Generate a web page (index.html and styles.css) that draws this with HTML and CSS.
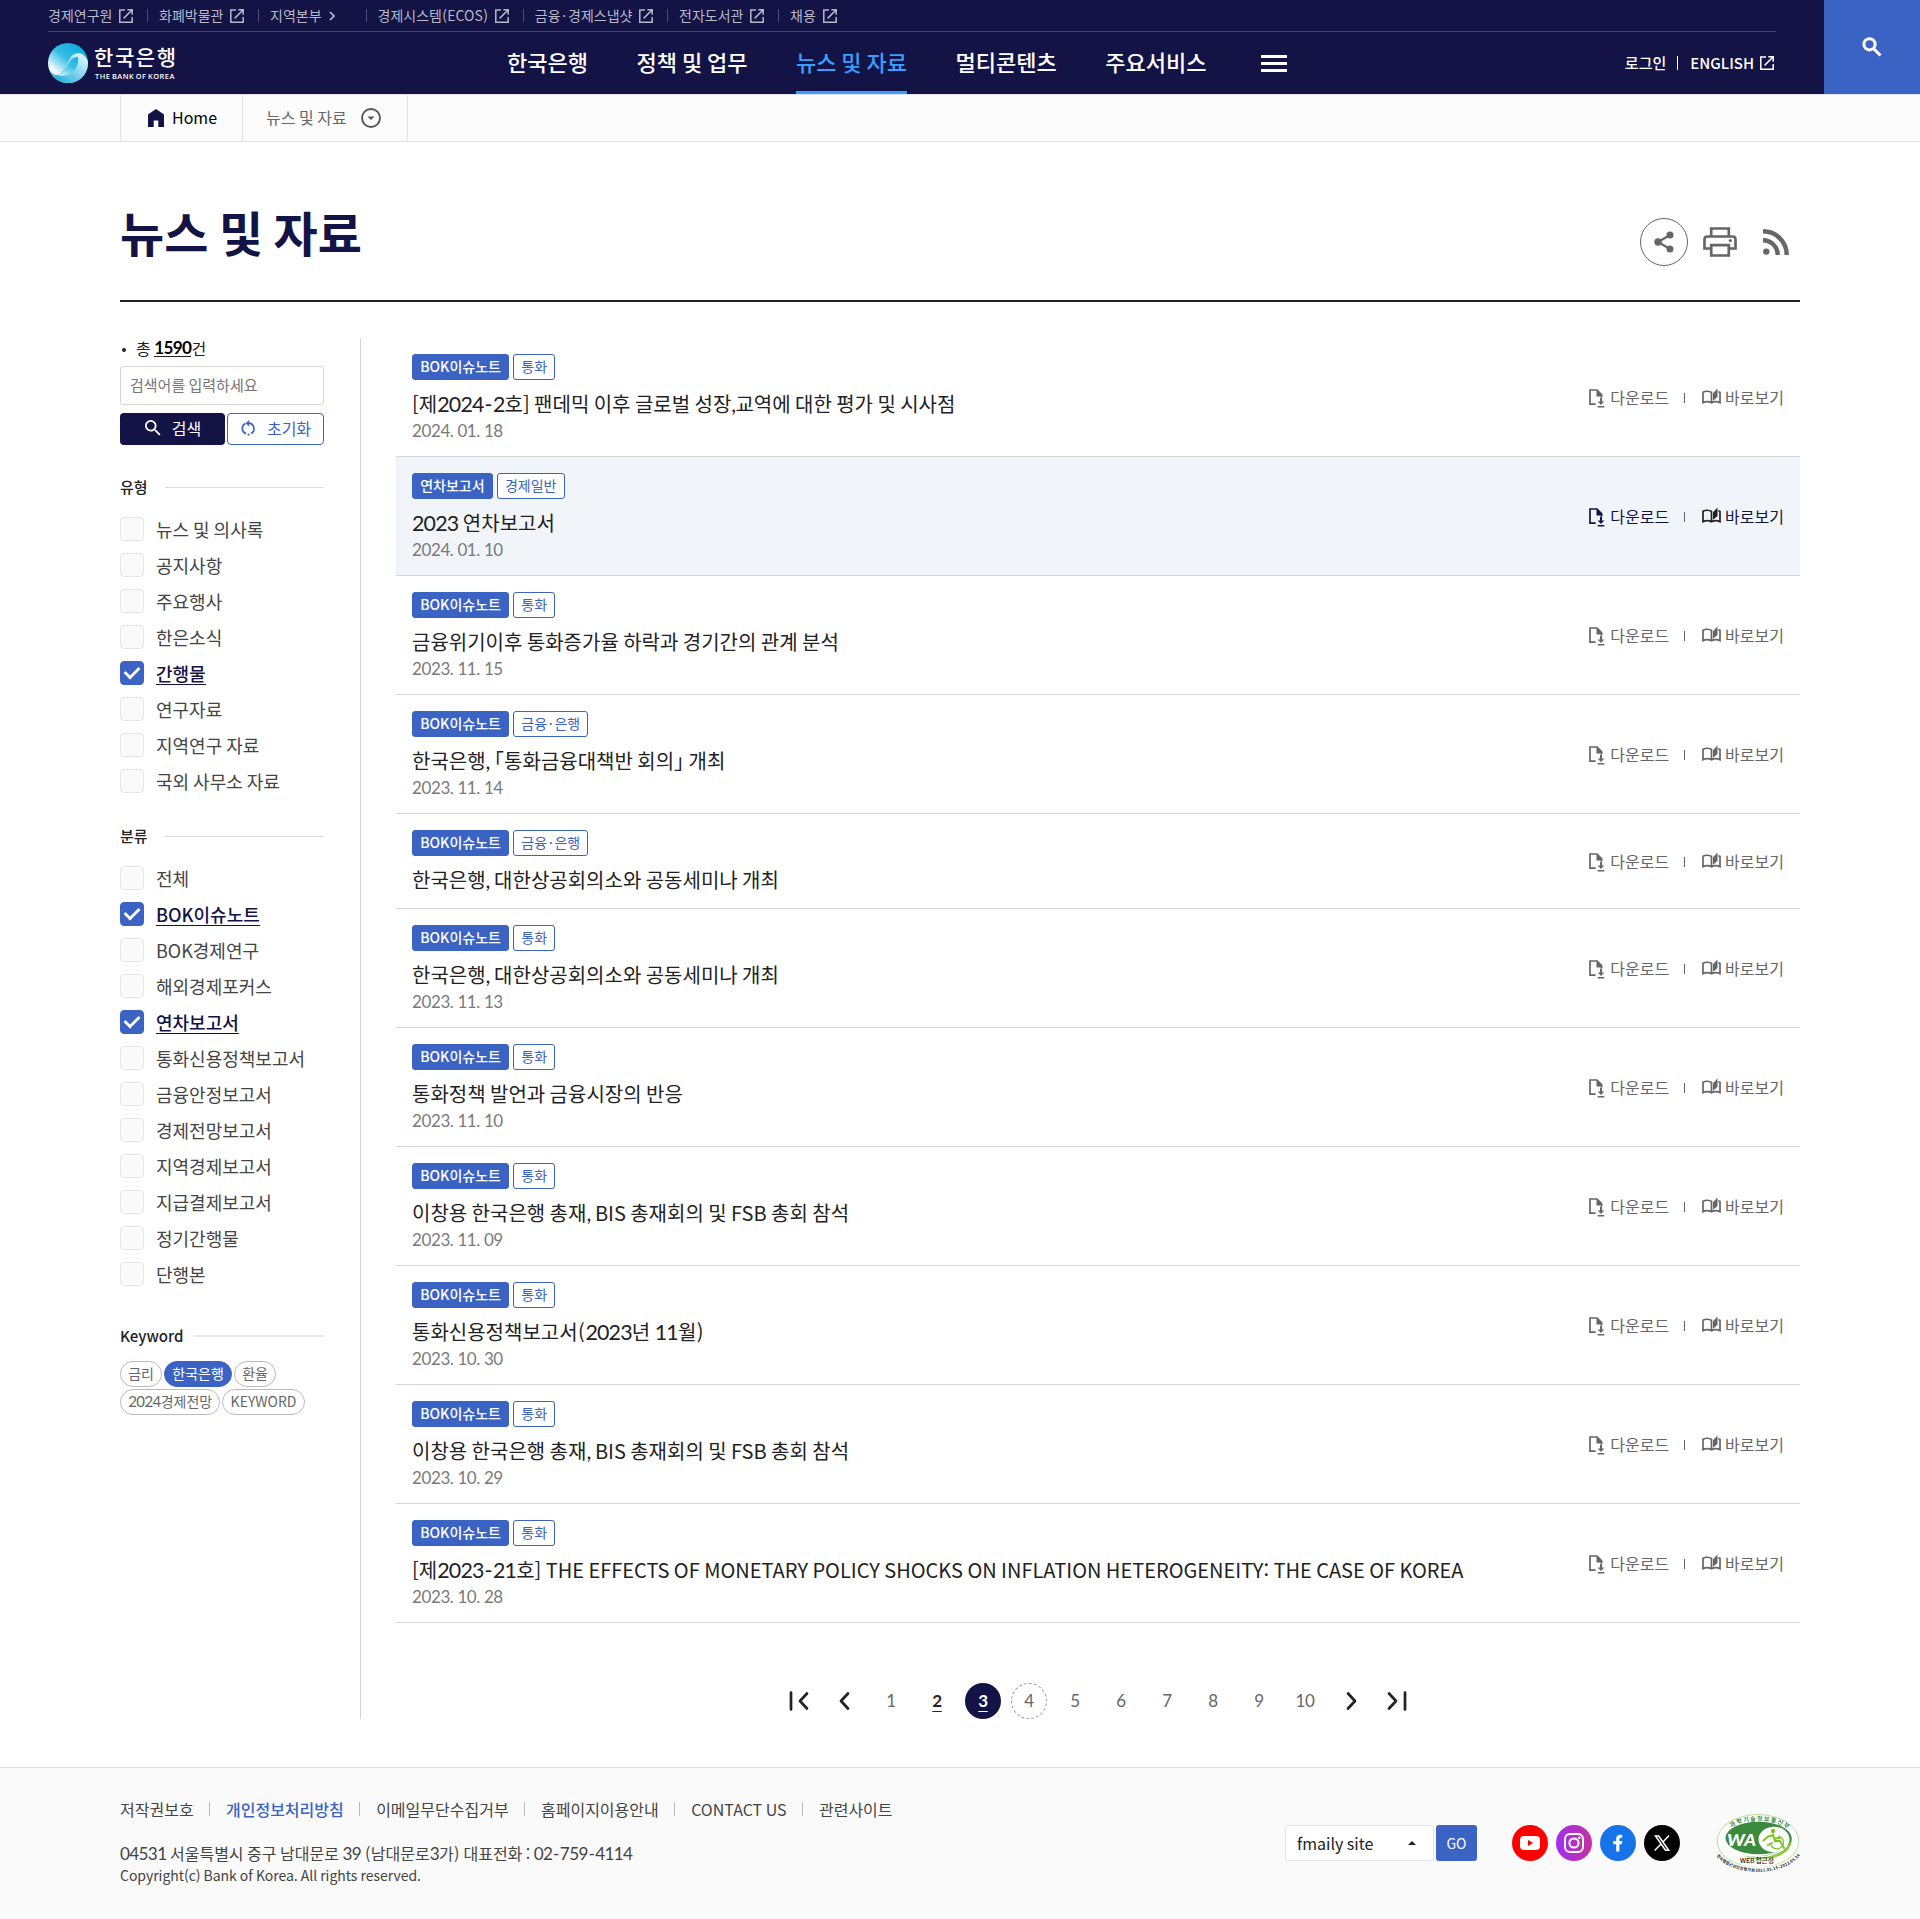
FILE: index.html
```html
<!DOCTYPE html>
<html lang="ko">
<head>
<meta charset="utf-8">
<title>뉴스 및 자료 | 한국은행</title>
<link rel="stylesheet" href="styles.css">
</head>
<body>
<svg class="sprite" aria-hidden="true">
  <symbol id="ext" viewBox="0 0 14 14"><path d="M6 1H.8v12.2h12.4V8M8.3.8h4.9v4.9M13 1 4.6 9.4" fill="none" stroke="currentColor" stroke-width="1.5"/></symbol>
  <symbol id="glass" viewBox="3 3 18 18"><path fill="currentColor" d="M15.5 14h-.79l-.28-.27A6.47 6.47 0 0 0 16 9.5 6.5 6.5 0 1 0 9.500 16c1.610 0 3.090-.59 4.230-1.570l.27.28v.79l5 4.990L20.490 19l-4.990-5zm-6 0C7.010 14 5 11.990 5 9.500S7.010 5 9.500 5 14 7.010 14 9.500 11.990 14 9.500 14z"/></symbol>
  <symbol id="down" viewBox="0 0 16 19"><path d="M6.600 15.200H1V1h7l4.500 4.500v3" fill="none" stroke="currentColor" stroke-width="1.700"/><path fill="currentColor" d="M7.500.4 13.300 6v1.500H7.500zM11 8.800h2v3.600h2.400L12 16l-3.400-3.600H11zM8.700 17h6.600v1.500H8.700z"/></symbol>
  <symbol id="book" viewBox="0 0 19 17"><path d="M9.500 14.800V4.500C7.500 2.900 3.500 2.900 1 4.300v10.300c2.800-1.200 6-1.100 8.500.2 2.500-1.300 5.700-1.400 8.500-.2V4.300l-1.800-.6" fill="none" stroke="currentColor" stroke-width="1.700"/><path fill="currentColor" d="m11 5.200 4.500-4.800v8.500L11 12.800z"/></symbol>
  <symbol id="prev" viewBox="0 0 20 20"><path d="M13 2.500 6 10l7 7.500" fill="none" stroke="#222" stroke-width="2.700" stroke-linecap="round" stroke-linejoin="round"/></symbol>
  <symbol id="first" viewBox="0 0 20 20"><path d="M2 1.500v17M18 2.500 11 10l7 7.500" fill="none" stroke="#222" stroke-width="2.700" stroke-linecap="round" stroke-linejoin="round"/></symbol>
</svg>

<header class="header">
  <div class="header-main">
    <div class="util">
      <a>경제연구원<svg class="ext"><use href="#ext"/></svg></a>
      <a>화폐박물관<svg class="ext"><use href="#ext"/></svg></a>
      <a class="branch">지역본부<svg class="chev" viewBox="0 0 6 10"><path d="m1 1 4 4-4 4" fill="none" stroke="currentColor" stroke-width="1.700"/></svg></a>
      <a>경제시스템<em class="p">(</em>ECOS<em class="p">)</em><svg class="ext"><use href="#ext"/></svg></a>
      <a>금융<em class="dot">·</em>경제스냅샷<svg class="ext"><use href="#ext"/></svg></a>
      <a>전자도서관<svg class="ext"><use href="#ext"/></svg></a>
      <a>채용<svg class="ext"><use href="#ext"/></svg></a>
    </div>
    <div class="gnb">
      <div class="logo">
        <svg class="logo-mark" viewBox="0 0 40 40">
          <defs>
            <linearGradient id="g1" x1=".8" y1="0" x2="0" y2="1"><stop offset="0" stop-color="#0aa8dc"/><stop offset=".4" stop-color="#35bde4"/><stop offset=".75" stop-color="#fff"/><stop offset="1" stop-color="#3fc3e6"/></linearGradient>
            <linearGradient id="g2" x1="1" y1="0" x2="0" y2="1"><stop offset="0" stop-color="#f4fcff"/><stop offset=".35" stop-color="#9fe0f2"/><stop offset="1" stop-color="#00a3d9"/></linearGradient>
            <linearGradient id="g3" x1=".9" y1="0" x2=".3" y2="1"><stop offset="0" stop-color="#16b0df"/><stop offset=".5" stop-color="#3fc1e6"/><stop offset="1" stop-color="#c9eef9"/></linearGradient>
          </defs>
          <circle cx="20" cy="20" r="20" fill="url(#g1)"/>
          <path d="M1 26C6 36 13 32 17 25s5-14 13-15c5 0 8 4 9.800 8C41 30 32 40 20 40 11 40 4 34 1 26z" fill="url(#g2)"/>
          <path d="M8 31c7 0 9-4 12-9s4-8 10-8c1 7-2 13-7 16-4 3-11 4-15 1z" fill="url(#g3)"/>
        </svg>
        <div class="logo-text"><strong>한국은행</strong><span>THE BANK OF KOREA</span></div>
      </div>
      <nav class="menu">
        <a>한국은행</a><a>정책 및 업무</a><a class="on">뉴스 및 자료</a><a>멀티콘텐츠</a><a>주요서비스</a>
      </nav>
      <span class="burger"><i></i><i></i><i></i></span>
      <div class="member"><a>로그인</a><i></i><a>ENGLISH</a><svg class="ext"><use href="#ext"/></svg></div>
    </div>
  </div>
  <button class="find"><svg viewBox="0 0 20 20"><circle cx="7.500" cy="7.300" r="5.600" fill="none" stroke="#fff" stroke-width="3"/><path d="m11.500 11.500 7 7" stroke="#fff" stroke-width="3"/></svg></button>
</header>

<div class="crumbs">
  <a class="home"><svg viewBox="0 0 16 18"><path fill="#131346" d="m8 0 8 5.500V18h-5.700v-6.500H5.700V18H0V5.500z"/></svg>Home</a>
  <a class="here">뉴스 및 자료<svg viewBox="0 0 20 20"><circle cx="10" cy="10" r="9" fill="none" stroke="#555" stroke-width="1.900"/><path fill="#555" d="M6.500 8.500h7L10 12z"/></svg></a>
</div>

<main class="page">
  <div class="head">
    <h1>뉴스 및 자료</h1>
    <div class="tools">
      <span class="share"><svg viewBox="0 0 20 22"><path d="M16 4 4 11l12 7" fill="none" stroke="#666" stroke-width="2.200"/><g fill="#666"><circle cx="16" cy="4" r="3.500"/><circle cx="4" cy="11" r="3.700"/><circle cx="16" cy="18" r="3.500"/></g></svg></span>
      <svg class="print" viewBox="0 0 34 30"><g fill="none" stroke="#666" stroke-width="2.700"><path d="M8.200 8.500V1.500h17.600v7.300M7.500 21.500H1.500V12.500q0-3 3-3h25q3 0 3 3v9h-6"/><path d="M8.200 18.200h17.600v10.300H8.200z"/></g><circle cx="27.300" cy="13.500" r="1.600" fill="#666"/></svg>
      <svg class="rss" viewBox="0 0 26 26"><circle cx="3.300" cy="22.600" r="3.200" fill="#666"/><path d="M0 11.200a14.700 14.700 0 0 1 14.700 14.700M0 2.200A23.700 23.700 0 0 1 23.700 25.900" fill="none" stroke="#666" stroke-width="4.400"/></svg>
    </div>
  </div>

  <div class="body">
    <aside class="side">
      <p class="total"><i></i>총 <b class="n">1590</b>건</p>
      <div class="query">검색어를 입력하세요</div>
      <div class="btns">
        <button class="go"><svg><use href="#glass"/></svg>검색</button>
        <button class="reset"><svg viewBox="0 0 16 17"><path d="M4.600 3.600A6 6 0 0 0 5.200 14.500M10.800 14.500A6 6 0 0 0 8 3.300H7M7 15.500h2" fill="none" stroke="currentColor" stroke-width="1.800"/><path fill="currentColor" d="M8.700 0v7L4.800 3.500z"/></svg>초기화</button>
      </div>
      <h2>유형</h2>
      <ul class="checks">
        <li><i></i>뉴스 및 의사록</li>
        <li><i></i>공지사항</li>
        <li><i></i>주요행사</li>
        <li><i></i>한은소식</li>
        <li class="on"><i></i><span>간행물</span></li>
        <li><i></i>연구자료</li>
        <li><i></i>지역연구 자료</li>
        <li><i></i>국외 사무소 자료</li>
      </ul>
      <h2 class="kind">분류</h2>
      <ul class="checks">
        <li><i></i>전체</li>
        <li class="on"><i></i><span>BOK이슈노트</span></li>
        <li><i></i>BOK경제연구</li>
        <li><i></i>해외경제포커스</li>
        <li class="on"><i></i><span>연차보고서</span></li>
        <li><i></i>통화신용정책보고서</li>
        <li><i></i>금융안정보고서</li>
        <li><i></i>경제전망보고서</li>
        <li><i></i>지역경제보고서</li>
        <li><i></i>지급결제보고서</li>
        <li><i></i>정기간행물</li>
        <li><i></i>단행본</li>
      </ul>
      <h2 class="kw">Keyword</h2>
      <div class="tags"><span>금리</span><span class="on">한국은행</span><span>환율</span><span><em class="n">2024</em>경제전망</span><span>KEYWORD</span></div>
    </aside>

    <section class="content">
      <ul class="list">
        <li><div><p class="badges"><b>BOK이슈노트</b><span>통화</span></p><h3>[제<em class="n">2024<em class="h">-</em>2</em>호] 팬데믹 이후 글로벌 성장<em class="n">,</em>교역에 대한 평가 및 시사점</h3><p class="date">2024. 01. 18</p></div>
          <div class="acts"><a><svg class="down"><use href="#down"/></svg>다운로드</a><i></i><a><svg class="book"><use href="#book"/></svg>바로보기</a></div></li>
        <li class="hover"><div><p class="badges"><b>연차보고서</b><span>경제일반</span></p><h3><em class="n">2023</em> 연차보고서</h3><p class="date">2024. 01. 10</p></div>
          <div class="acts"><a><svg class="down"><use href="#down"/></svg>다운로드</a><i></i><a><svg class="book"><use href="#book"/></svg>바로보기</a></div></li>
        <li><div><p class="badges"><b>BOK이슈노트</b><span>통화</span></p><h3>금융위기이후 통화증가율 하락과 경기간의 관계 분석</h3><p class="date">2023. 11. 15</p></div>
          <div class="acts"><a><svg class="down"><use href="#down"/></svg>다운로드</a><i></i><a><svg class="book"><use href="#book"/></svg>바로보기</a></div></li>
        <li><div><p class="badges"><b>BOK이슈노트</b><span>금융<em class="dot">·</em>은행</span></p><h3>한국은행<em class="n">,</em> ｢통화금융대책반 회의｣ 개최</h3><p class="date">2023. 11. 14</p></div>
          <div class="acts"><a><svg class="down"><use href="#down"/></svg>다운로드</a><i></i><a><svg class="book"><use href="#book"/></svg>바로보기</a></div></li>
        <li><div><p class="badges"><b>BOK이슈노트</b><span>금융<em class="dot">·</em>은행</span></p><h3>한국은행<em class="n">,</em> 대한상공회의소와 공동세미나 개최</h3></div>
          <div class="acts"><a><svg class="down"><use href="#down"/></svg>다운로드</a><i></i><a><svg class="book"><use href="#book"/></svg>바로보기</a></div></li>
        <li><div><p class="badges"><b>BOK이슈노트</b><span>통화</span></p><h3>한국은행<em class="n">,</em> 대한상공회의소와 공동세미나 개최</h3><p class="date">2023. 11. 13</p></div>
          <div class="acts"><a><svg class="down"><use href="#down"/></svg>다운로드</a><i></i><a><svg class="book"><use href="#book"/></svg>바로보기</a></div></li>
        <li><div><p class="badges"><b>BOK이슈노트</b><span>통화</span></p><h3>통화정책 발언과 금융시장의 반응</h3><p class="date">2023. 11. 10</p></div>
          <div class="acts"><a><svg class="down"><use href="#down"/></svg>다운로드</a><i></i><a><svg class="book"><use href="#book"/></svg>바로보기</a></div></li>
        <li><div><p class="badges"><b>BOK이슈노트</b><span>통화</span></p><h3>이창용 한국은행 총재<em class="n">,</em> BIS 총재회의 및 FSB 총회 참석</h3><p class="date">2023. 11. 09</p></div>
          <div class="acts"><a><svg class="down"><use href="#down"/></svg>다운로드</a><i></i><a><svg class="book"><use href="#book"/></svg>바로보기</a></div></li>
        <li><div><p class="badges"><b>BOK이슈노트</b><span>통화</span></p><h3>통화신용정책보고서<em class="p">(</em><em class="n">2023</em>년 <em class="n">11</em>월<em class="p">)</em></h3><p class="date">2023. 10. 30</p></div>
          <div class="acts"><a><svg class="down"><use href="#down"/></svg>다운로드</a><i></i><a><svg class="book"><use href="#book"/></svg>바로보기</a></div></li>
        <li><div><p class="badges"><b>BOK이슈노트</b><span>통화</span></p><h3>이창용 한국은행 총재<em class="n">,</em> BIS 총재회의 및 FSB 총회 참석</h3><p class="date">2023. 10. 29</p></div>
          <div class="acts"><a><svg class="down"><use href="#down"/></svg>다운로드</a><i></i><a><svg class="book"><use href="#book"/></svg>바로보기</a></div></li>
        <li><div><p class="badges"><b>BOK이슈노트</b><span>통화</span></p><h3>[제<em class="n">2023<em class="h">-</em>21</em>호] THE EFFECTS OF MONETARY POLICY SHOCKS ON INFLATION HETEROGENEITY: THE CASE OF KOREA</h3><p class="date">2023. 10. 28</p></div>
          <div class="acts"><a><svg class="down"><use href="#down"/></svg>다운로드</a><i></i><a><svg class="book"><use href="#book"/></svg>바로보기</a></div></li>
      </ul>
      <div class="paging">
        <a><svg><use href="#first"/></svg></a>
        <a><svg><use href="#prev"/></svg></a>
        <a>1</a><a class="over">2</a><a class="now">3</a><a class="focus">4</a><a>5</a><a>6</a><a>7</a><a>8</a><a>9</a><a>10</a>
        <a><svg class="flip"><use href="#prev"/></svg></a>
        <a><svg class="flip"><use href="#first"/></svg></a>
      </div>
    </section>
  </div>
</main>

<footer class="footer">
  <div class="foot">
    <div class="info">
      <div class="links"><a>저작권보호</a><a class="pri">개인정보처리방침</a><a>이메일무단수집거부</a><a>홈페이지이용안내</a><a>CONTACT US</a><a>관련사이트</a></div>
      <p class="addr"><em class="n">04531</em> 서울특별시 중구 남대문로 <em class="n">39</em> <em class="p">(</em>남대문로<em class="n">3</em>가<em class="p">)</em> 대표전화 : <em class="n">02<em class="h">-</em>759<em class="h">-</em>4114</em></p>
      <p class="copy">Copyright(c) Bank of Korea. All rights reserved.</p>
    </div>
    <div class="family">fmaily site<svg viewBox="0 0 8 4"><path fill="#222" d="M0 4h8L4 0z"/></svg></div>
    <button class="jump">GO</button>
    <div class="sns">
      <svg viewBox="0 0 36 36"><circle cx="18" cy="18" r="18" fill="#f00"/><rect x="8" y="11" width="20" height="14" rx="4" fill="#fff"/><path fill="#f00" d="M16 15v6l5.200-3z"/></svg>
      <svg viewBox="0 0 36 36"><defs><linearGradient id="ig"><stop offset="0" stop-color="#a32ff0"/><stop offset="1" stop-color="#c232a0"/></linearGradient></defs><circle cx="18" cy="18" r="18" fill="url(#ig)"/><g fill="none" stroke="#fff" stroke-width="2"><rect x="9" y="9" width="18" height="18" rx="5"/><circle cx="18" cy="18" r="4.600"/></g><circle cx="23.300" cy="12.800" r="1.300" fill="#fff"/></svg>
      <svg viewBox="0 0 36 36"><circle cx="18" cy="18" r="18" fill="#1773ea"/><path fill="#fff" d="M16.200 26.500v-7.300h-3v-3.100h3v-2.300c0-3 1.700-4 4-4 1 0 1.700.1 2 .2v2.700h-1.300c-1.200 0-1.500.7-1.500 1.600v1.800h2.900l-.5 3.100h-2.400v7.300z"/></svg>
      <svg viewBox="0 0 36 36"><circle cx="18" cy="18" r="18"/><path d="M11.500 11h3.200l10 14.200h-3.200zM25 10.500l-6.300 6.700M17 19.100l-6.300 6.500" fill="none" stroke="#fff" stroke-width="1.500"/></svg>
    </div>
    <svg class="wa" viewBox="0 0 84 60">
      <defs><path id="arcTop" d="M15.500 14.500C28 5.500 57 5.500 69.500 14.500"/><path id="arcBot" d="M.5 43C18 64 66 64 83.500 43"/></defs>
      <ellipse cx="42" cy="28" rx="40.800" ry="26.500" fill="#fff" stroke="#b3d98b" stroke-width=".9"/>
      <path d="M0 38C18 59.500 66 59.500 84 38V60H0z" fill="#fafafa"/>
      <path d="M24 42.500c24 6 50-1 51.500-20 4 18-20 30-51.500 20z" fill="#8cc63f"/>
      <ellipse cx="42.500" cy="25" rx="33" ry="16.300" fill="#3a8b3e"/>
      <ellipse cx="58" cy="26.500" rx="15.500" ry="12.800" fill="#fff"/>
      <path d="M24 42.500c24 3 46-1 51.500-18-4 16-28 21-51.500 18z" fill="#3a8b3e"/>
      <text x="11" y="33" class="wa-big" textLength="29" lengthAdjust="spacingAndGlyphs">WA</text>
      <g fill="none" stroke="#7cc220" stroke-linecap="round"><path d="M62 23a6.500 6.500 0 1 1-7 9" stroke-width="1.200"/><path d="M57 21.500l2 6.500h5l4 7M47.500 27.500l4.500-4 4-1M59 25.500l5-.5M52 32l4-2" stroke-width="1.900"/></g>
      <circle cx="57" cy="18" r="2.200" fill="#7cc220"/>
      <text class="wa-top"><textPath href="#arcTop" textLength="59">과학기술정보통신부</textPath></text>
      <text x="24" y="50" class="wa-mid" textLength="34" lengthAdjust="spacingAndGlyphs">WEB 접근성</text>
      <text class="wa-bot"><textPath href="#arcBot" textLength="92">한국웹접근성인증평가원 2021.05.15~2022.05.14</textPath></text>
    </svg>
  </div>
</footer>
</body>
</html>
```
FILE: styles.css
```css
* { box-sizing: border-box; }
body, h1, h2, h3, p, ul { margin: 0; padding: 0; }
body { font: 16px/1.5 "Noto Sans CJK KR", sans-serif; color: #222; background: #fff; }
h1, h2, h3, p, a, li, div, button { word-spacing: -.06em; }
ul { list-style: none; }
em, i { font-style: normal; }
button { font: inherit; border: 0; padding: 0; }
svg { display: block; flex: none; }
.sprite { display: none; }
.n { font-family: Lato, "Noto Sans CJK KR", sans-serif; font-size: 1.070em; line-height: 1; letter-spacing: -.037em; }
.h { padding: 0 .06em 0 .04em; }
.p { padding: 0 .025em; }
.dot { padding: 0 .125em; }
.ext { width: 14px; height: 14px; }

/* header */
.header { display: flex; height: 94px; background: #131346; color: #fff; }
.header-main { width: 1728px; margin-left: 48px; }
.util { display: flex; height: 32px; border-bottom: 1px solid #42426b; font-size: 14px; line-height: 31px; color: #b8b8c8; }
.util a { display: flex; align-items: center; position: relative; margin-right: 25.600px; }
.util .ext { margin-left: 7px; }
.util .chev { width: 6px; height: 10px; margin-left: 7px; }
.util .branch { margin-right: 43px; }
.util a + a::before { content: ""; position: absolute; left: -12px; top: 9px; width: 1px; height: 13px; background: #4c4c74; }
.gnb { display: flex; align-items: center; height: 62px; }
.logo { display: flex; width: 459px; gap: 6px; }
.logo-mark { width: 40px; height: 40px; }
.logo-text { display: flex; flex-direction: column; width: 84px; }
.logo-text strong { font-size: 21px; line-height: 26px; margin-top: 0; font-weight: 500; letter-spacing: 1.600px; white-space: nowrap; }
.logo-text span { font: 600 7.400px/10px "Open Sans", sans-serif; white-space: nowrap; letter-spacing: .52px; margin: 2px 0 0 1px; }
.menu { display: flex; gap: 48.600px; font-size: 22px; font-weight: 500; line-height: 58px; }
.menu a { height: 62px; }
.menu .on { color: #379fff; box-shadow: inset 0 -3px #379fff; }
.burger { display: grid; gap: 4px; width: 26px; margin: 0 0 0 54px; }
.burger i { height: 3px; background: #fff; }
.member { display: flex; align-items: center; margin-left: auto; font-size: 15px; font-weight: 500; padding-right: 2px; }
.member i { width: 1px; height: 14px; background: #fff; margin: 0 12px 0 11px; }
.member .ext { margin-left: 6px; }
.find { width: 96px; margin-left: auto; background: #3b63c4; display: grid; place-items: center; }
.find svg { width: 20px; height: 20px; }

/* breadcrumb */
.crumbs { display: flex; height: 48px; padding-left: 120px; background: #fcfcfc; border: solid #e3e3e3; border-width: 1px 0; }
.crumbs a { display: flex; align-items: center; border-right: 1px solid #e3e3e3; line-height: 44px; padding-bottom: 2px; }
.crumbs .home { width: 123px; border-left: 1px solid #e3e3e3; padding-left: 27px; gap: 8px; color: #000; }
.home svg { width: 16px; height: 18px; margin-top: 2px; }
.crumbs .here { width: 165px; padding-left: 23px; gap: 14px; color: #666; }
.here svg { width: 20px; height: 20px; margin-top: 1px; }

/* page head */
.page { width: 1680px; margin: 0 auto; }
.head { display: flex; justify-content: space-between; height: 160px; border-bottom: 2px solid #222; padding-top: 53px; }
h1 { font-size: 48px; line-height: 72px; font-weight: 700; color: #131346; }
.tools { display: flex; align-items: center; height: 48px; margin-top: 23px; padding-right: 11px; }
.share { width: 48px; height: 48px; border: 1px solid #666; border-radius: 50%; display: grid; place-items: center; }
.share svg { width: 20px; height: 22px; }
.print { width: 34px; height: 30px; margin: 0 26px 0 15px; }
.rss { width: 26px; height: 26px; }

/* filters */
.body { display: flex; margin-top: 36px; }
.side { width: 241px; padding-right: 36px; border-right: 1px solid #d5d5d5; }
.total { display: flex; align-items: center; height: 20px; font-size: 16px; line-height: 20px; white-space: pre; }
.total i { width: 4px; height: 4px; border-radius: 50%; background: #222; margin: 3px 10px 0 2px; }
.total b { color: #000; border-bottom: 1px solid #222; line-height: 17px; }
.query { height: 39px; margin-top: 8px; border: 1px solid #d5d5d5; border-radius: 3px; padding-left: 9px; font-size: 15px; line-height: 36px; color: #767676; }
.btns { display: flex; gap: 2px; margin-top: 8px; }
.btns button { display: flex; align-items: center; justify-content: center; height: 32px; border-radius: 4px; font-size: 16px; line-height: 28px; padding: 0 0 2px 1px; }
.btns .go { width: 105px; background: #131346; color: #fff; gap: 11px; }
.btns .reset { width: 97px; background: #fff; color: #3b63c4; border: 1px solid #3b63c4; gap: 11px; }
.go svg { width: 16px; height: 16px; }
.reset svg { width: 15px; height: 16px; }
.side h2 { display: flex; align-items: center; height: 24px; margin-top: 30px; gap: 17px; font-size: 15px; font-weight: 500; }
.side h2::after { content: ""; flex: 1; height: 1px; background: #ddd; }
.side .kind { margin-top: 25px; }
.checks { margin-top: 12px; }
.checks li { display: flex; align-items: center; height: 36px; gap: 12px; font-size: 18px; line-height: 24px; color: #444; }
.checks i { width: 24px; height: 24px; border: 1px solid #e5e5e5; border-radius: 4px; background: #fafafa; }
.checks .on { color: #131346; font-weight: 500; }
.checks .on i { display: grid; place-items: center; background: #3b63c4; border-color: #3b63c4; }
.checks .on i::after { content: ""; width: 13px; height: 7px; border: solid #fff; border-width: 0 0 3px 3px; transform: translateY(-2px) rotate(-45deg) scale(.92); }
.checks span { height: 24px; border-bottom: 1px solid #131346; }
.side .kw { margin-top: 32px; gap: 11px; }
.side .kw::after { height: 2px; background: #e8e8e8; }
.tags { display: flex; flex-wrap: wrap; gap: 2px; margin-top: 13px; }
.tags span { height: 26px; padding: 0 7.200px; border: 1px solid #bbb; border-radius: 13px; font-size: 14px; line-height: 23px; color: #666; }
.tags .on { background: #3b63c4; border-color: #3b63c4; color: #fff; }

/* list */
.content { flex: 1; padding-left: 35px; }
.list li { display: flex; justify-content: space-between; align-items: center; padding: 16px 16px 14px; border-bottom: 1px solid #d5d5d5; }
.list .hover { background: #f1f5fa; }
.badges { display: flex; gap: 4px; height: 26px; font-size: 14px; line-height: 23px; }
.badges b, .badges span { padding: 0 7.200px; border: 1px solid #3b63c4; border-radius: 3px; background: #fff; color: #3b63c4; }
.badges b { font-weight: 500; background: #3b63c4; color: #fff; }
.list h3 { height: 30px; margin-top: 8px; padding-top: 1px; font-size: 20px; font-weight: 400; line-height: 30px; white-space: nowrap; }
.date { padding-top: 1px; margin-bottom: -1px; font: 17px/24px Lato, sans-serif; word-spacing: 0; letter-spacing: -.4px; color: #7a7a7a; }
.acts { display: flex; align-items: center; color: #666; margin-top: -2px; }
.acts a { display: flex; align-items: center; }
.acts > i { width: 1px; height: 10px; background: #666; margin: 2px 17px 0 15px; }
.down { width: 16px; height: 19px; margin: 2px 5px 0 0; }
.book { width: 19px; height: 17px; margin: -2px 4px 0 0; }
.hover .acts { color: #131346; }
.hover .book { color: #222; }

/* paging */
.paging { display: flex; justify-content: center; gap: 10px; margin-top: 60px; font: 17px/36px Lato, sans-serif; letter-spacing: -.4px; color: #666; text-align: center; }
.paging a { width: 36px; height: 36px; border-radius: 50%; }
.paging svg { width: 20px; height: 20px; margin: 8px; }
.paging .flip { transform: scaleX(-1); }
.over, .now { font-weight: 700; text-decoration: underline; text-underline-offset: 4px; text-decoration-thickness: 1px; }
.over { color: #222; }
.now { background: #131346; color: #fff; }
.paging .focus { border: 1px dashed #999; line-height: 34px; }

/* footer */
.footer { margin-top: 48px; height: 152px; background: #fafafa; border-top: 1px solid #e0e0e0; }
.foot { display: flex; width: 1680px; margin: 0 auto; color: #444; }
.info { flex: 1; padding-top: 29px; }
.links { display: flex; line-height: 24px; }
.links a + a { display: flex; align-items: center; }
.links a + a::before { content: ""; width: 1px; height: 14px; margin: 0 15.700px; background: #bbb; }
.links .pri { color: #3b63c4; font-weight: 500; }
.addr { height: 24px; margin-top: 20px; line-height: 24px; }
.copy { font-size: 14px; line-height: 21px; letter-spacing: -.03px; }
.family { display: flex; align-items: center; justify-content: space-between; width: 149px; height: 36px; margin: 57px 2px 0 0; padding: 0 17px 0 11px; background: #fff; border: 1px solid #e3e3e3; border-radius: 3px; color: #222; }
.family svg { width: 8px; height: 4px; }
.jump { width: 41px; height: 36px; margin-top: 57px; background: #3b63c4; color: #fff; border-radius: 3px; font-size: 14px; }
.sns { display: flex; gap: 8px; margin: 57px 36px 0 35px; }
.sns svg { width: 36px; height: 36px; }
.wa { width: 84px; height: 60px; margin-top: 45px; }
.wa text { font-family: "Noto Sans CJK KR", sans-serif; font-weight: 700; fill: #222; }
.wa .wa-big { font: italic 900 17.500px Lato, sans-serif; fill: #fff; }
.wa .wa-top { font-size: 6px; fill: #3a8b3e; }
.wa .wa-mid { font-size: 6.500px; font-weight: 500; }
.wa .wa-bot { font-size: 4px; }
```
